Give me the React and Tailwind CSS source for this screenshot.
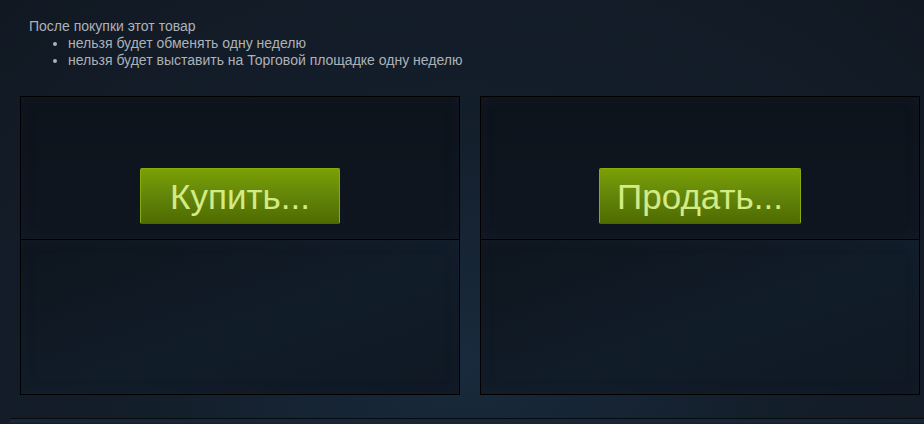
import React from 'react'

// ─── Trade panel ──────────────────────────────────────────────────────────────

function Panel({ label, width }) {
  return (
    <div className="flex w-[440px] flex-col border border-black">
      <div className="flex h-[143px] justify-center border-b border-black bg-[linear-gradient(180deg,#0d131b_0%,#0f1620_100%)] pt-[71px] shadow-[inset_0_0_14px_rgba(30,45,62,0.25)]">
        <button
          className={`${width} flex h-[56px] items-center justify-center rounded-[2px] border border-[#87ab0c] border-b-[#4d6600] bg-[linear-gradient(180deg,#7ba005_0%,#62850a_50%,#4f6b00_100%)] text-[35px] leading-none text-[#d3ea86]`}
          style={{ fontFamily: '"Liberation Sans", Arial, sans-serif' }}
        >
          {label}
        </button>
      </div>
      <div className="h-[154px] bg-[linear-gradient(160deg,#0e151d_0%,#111c29_55%,#0f1823_100%)] shadow-[inset_0_0_14px_rgba(30,45,62,0.25)]" />
    </div>
  )
}

// ─── Page ─────────────────────────────────────────────────────────────────────

export default function App() {
  return (
    <div
      className="h-[424px] w-[924px] overflow-hidden bg-[radial-gradient(ellipse_at_50%_85%,#182a3c_0%,#141f2c_45%,#111822_100%)]"
      style={{ fontFamily: '"Liberation Sans", Arial, sans-serif' }}
    >
      <div className="pl-[29px] pt-[18px] text-[14px] leading-[17px] text-[#acb2b8]">
        <div>После покупки этот товар</div>
        <ul className="list-disc pl-[39px]">
          <li>нельзя будет обменять одну неделю</li>
          <li>нельзя будет выставить на Торговой площадке одну неделю</li>
        </ul>
      </div>

      <div className="mt-[27px] flex gap-[20px] pl-[20px]">
        <Panel label="Купить..." width="w-[200px]" />
        <Panel label="Продать..." width="w-[202px]" />
      </div>

      <div className="ml-[10px] mt-[23px] h-[5px] border-t border-[#080c11] bg-[#182636]" />
    </div>
  )
}
